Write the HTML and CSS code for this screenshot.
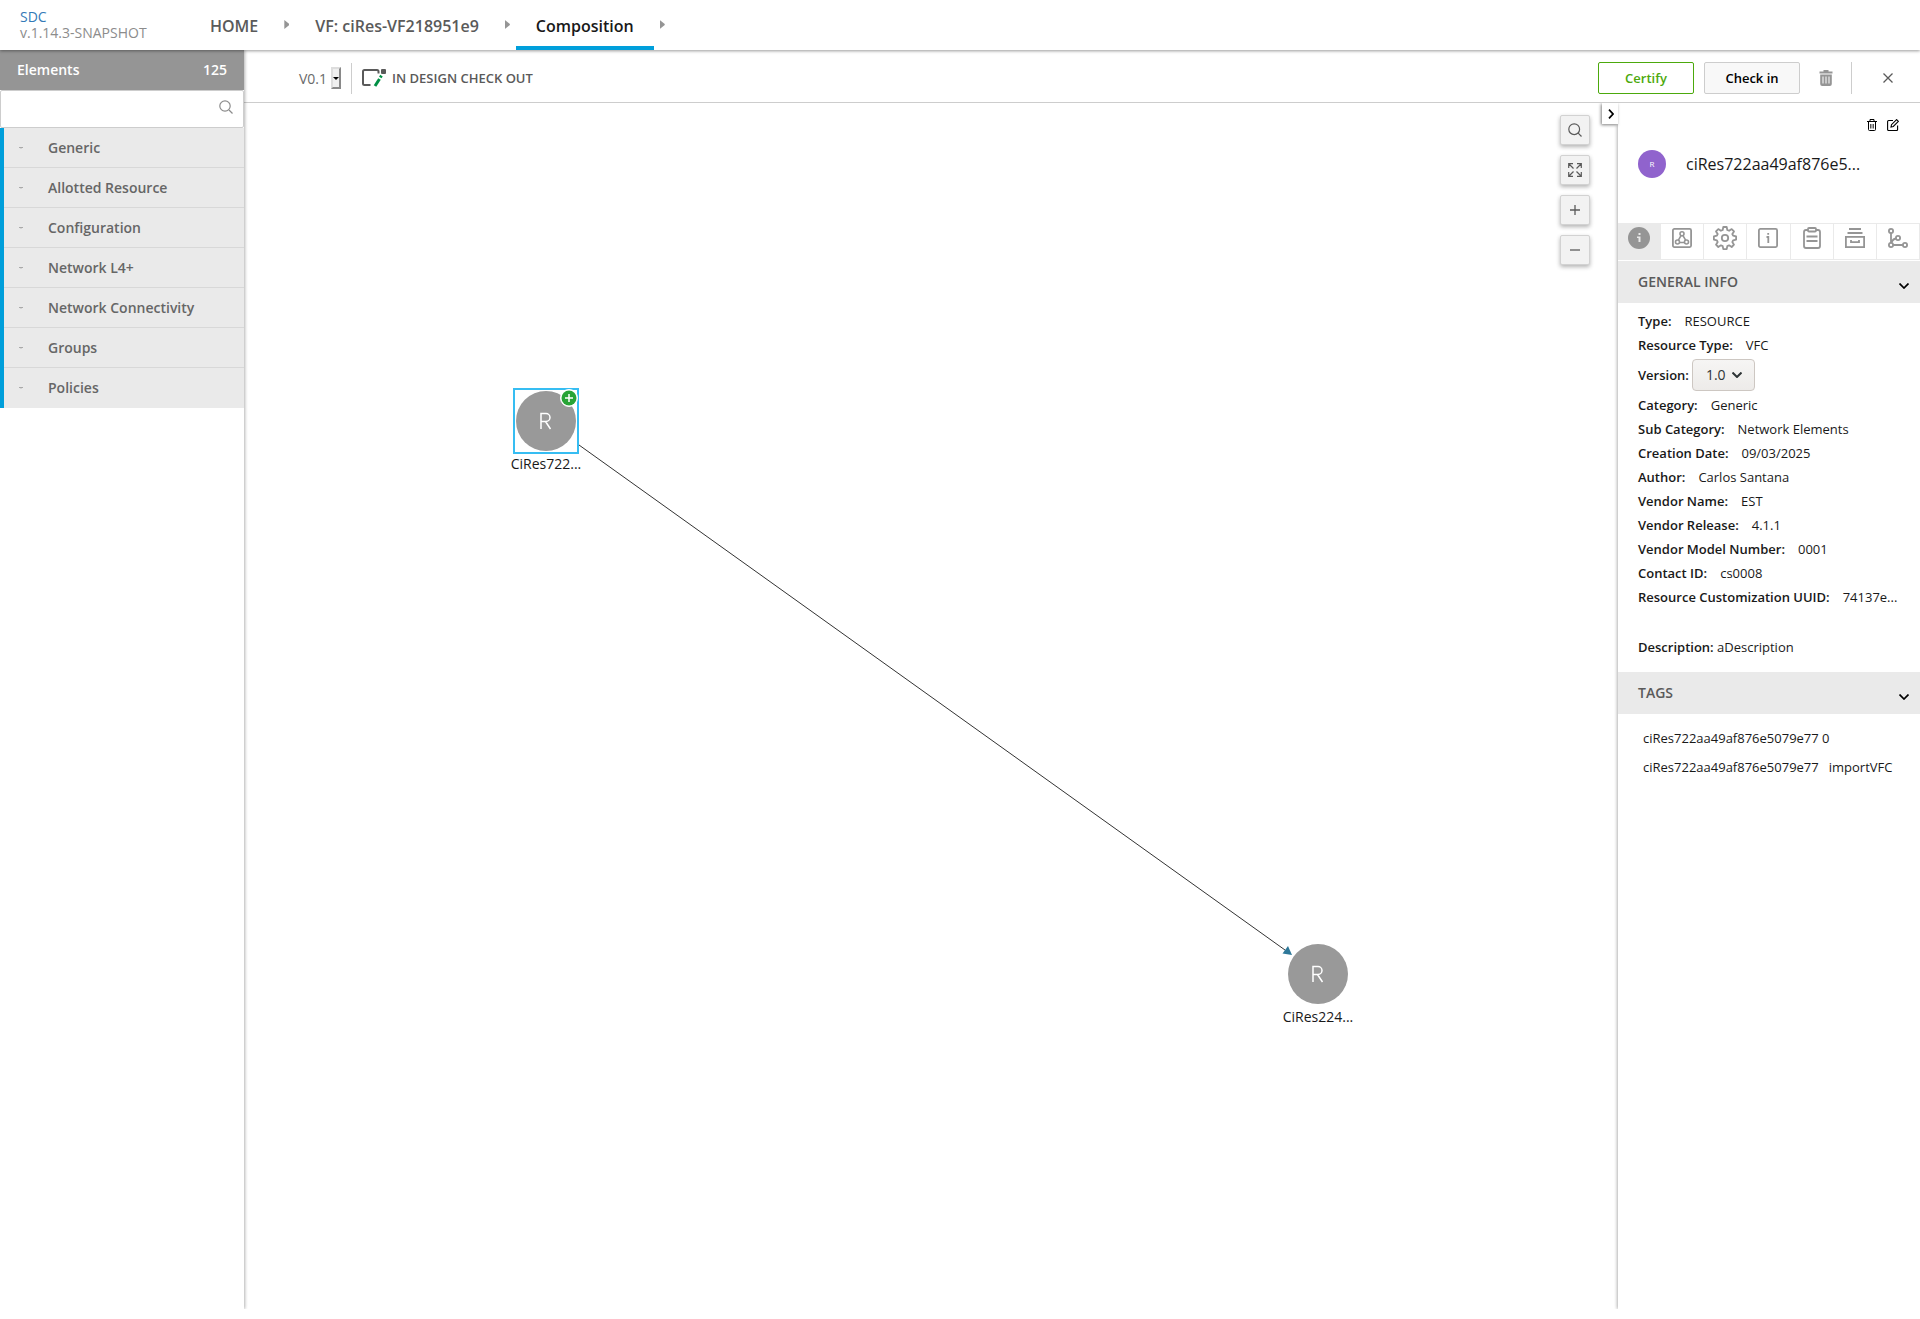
FILE: index.html
```html
<!DOCTYPE html>
<html lang="en">
<head>
    <meta charset="UTF-8">
    <meta name="viewport" content="width=device-width, initial-scale=1.0">
    <title>SDC - Composition</title>
    <link rel="stylesheet" href="styles.css">
</head>
<body>
    <header class="top-nav">
        <div class="logo">
            <a href="#">SDC</a>
            <span class="app-version">v.1.14.3-SNAPSHOT</span>
        </div>
        <nav class="breadcrumbs">
            <a class="crumb" href="#">HOME</a>
            <span class="crumb-arrow"></span>
            <a class="crumb" href="#">VF: ciRes-VF218951e9</a>
            <span class="crumb-arrow"></span>
            <a class="crumb active" href="#">Composition</a>
            <span class="crumb-arrow"></span>
        </nav>
    </header>

    <div class="workspace">
        <!-- Palette -->
        <aside class="palette">
            <div class="palette-header">
                <span>Elements</span>
                <span>125</span>
            </div>
            <div class="palette-search">
                <input type="text" aria-label="Search elements">
                <svg width="14" height="14" viewBox="0 0 14 14" fill="none" stroke="#8c8c8c" stroke-width="1.2">
                    <circle cx="6" cy="6" r="5.2"/>
                    <path d="M10 10l3.5 3.5"/>
                </svg>
            </div>
            <div class="palette-groups">
                <button class="group"><span class="group-arrow"></span>Generic</button>
                <button class="group"><span class="group-arrow"></span>Allotted Resource</button>
                <button class="group"><span class="group-arrow"></span>Configuration</button>
                <button class="group"><span class="group-arrow"></span>Network L4+</button>
                <button class="group"><span class="group-arrow"></span>Network Connectivity</button>
                <button class="group"><span class="group-arrow"></span>Groups</button>
                <button class="group"><span class="group-arrow"></span>Policies</button>
            </div>
        </aside>

        <div class="main">
            <!-- Toolbar -->
            <div class="toolbar">
                <label class="version-label" for="version">V0.1</label>
                <select class="version-select" id="version">
                    <option>V0.1</option>
                </select>
                <div class="status">
                    <svg width="24" height="18" viewBox="0 0 24 18" fill="none">
                        <path d="M16.5 4.5V2.5Q16.5 1 15 1H2.5Q1 1 1 2.5v12Q1 16 2.5 16h6" stroke="#5a5a5a" stroke-width="2"/>
                        <rect x="19" y="0" width="5" height="5" rx="1" fill="#5a5a5a"/>
                        <path d="M13 17l4.500-7" stroke="#009045" stroke-width="3"/>
                        <path d="M18.300 8.500l1.200-1.800" stroke="#009045" stroke-width="3"/>
                    </svg>
                    <span>IN DESIGN CHECK OUT</span>
                </div>
                <div class="toolbar-actions">
                    <button class="btn btn-certify">Certify</button>
                    <button class="btn btn-checkin">Check in</button>
                    <button class="icon-btn" aria-label="Delete">
                        <svg width="14" height="16" viewBox="0 0 14 16">
                            <path d="M0.500 1.500h4V0h5v1.500h4v2h-13z" fill="#959595"/>
                            <path d="M1.200 4.500h11.600V14q0 2-2 2H3.200q-2 0-2-2z" fill="#959595"/>
                            <path d="M4 6.500v7M7 6.500v7M10 6.500v7" stroke="#fff" stroke-width="1"/>
                        </svg>
                    </button>
                    <button class="icon-btn close-btn" aria-label="Close">
                        <svg width="10" height="10" viewBox="0 0 10 10" stroke="#5a5a5a" stroke-width="1.300">
                            <path d="M0.500 0.500l9 9M9.500 0.500l-9 9"/>
                        </svg>
                    </button>
                </div>
            </div>

            <div class="content">
                <!-- Composition graph -->
                <div class="canvas">
                    <svg class="edges" aria-hidden="true">
                        <path d="M335 342L1041 847" stroke="#333" fill="none"/>
                        <path d="M1048 852l-9.500-1.500 5.500-7.500z" fill="#2d7899"/>
                    </svg>
                    <div class="node node-source selected">
                        <div class="node-icon">
                            <svg width="60" height="60" viewBox="0 0 60 60" fill="none" stroke="#fff" stroke-width="1.500">
                                <circle cx="30" cy="30" r="30" fill="#999" stroke="none"/>
                                <path d="M25 38V22.500h5a4 4 0 0 1 0 8H25M29.500 30.500l5 7.500"/>
                            </svg>
                        </div>
                        <span class="node-name">CiRes722...</span>
                        <button class="node-add" aria-label="Add">
                            <svg width="16" height="16" viewBox="0 0 16 16">
                                <circle cx="8" cy="8" r="7.500" fill="#28a436"/>
                                <path d="M8 4v8M4 8h8" stroke="#fff" stroke-width="1.500"/>
                            </svg>
                        </button>
                    </div>
                    <div class="node node-target">
                        <div class="node-icon">
                            <svg width="60" height="60" viewBox="0 0 60 60" fill="none" stroke="#fff" stroke-width="1.500">
                                <circle cx="30" cy="30" r="30" fill="#999" stroke="none"/>
                                <path d="M25 38V22.500h5a4 4 0 0 1 0 8H25M29.500 30.500l5 7.500"/>
                            </svg>
                        </div>
                        <span class="node-name">CiRes224...</span>
                    </div>

                    <div class="canvas-tools">
                        <button class="tool" aria-label="Search">
                            <svg width="14" height="14" viewBox="0 0 14 14" fill="none" stroke="#5a5a5a" stroke-width="1.200">
                                <circle cx="6.200" cy="6.200" r="5.400"/>
                                <path d="M10.200 10.200l3.300 3.300"/>
                            </svg>
                        </button>
                        <button class="tool" aria-label="Fit to screen">
                            <svg width="14" height="14" viewBox="0 0 14 14" fill="none" stroke="#5a5a5a" stroke-width="1.200">
                                <path d="M0.700 5V0.700H5M9 0.700h4.300V5M13.300 9v4.300H9M5 13.300H0.700V9M1 1l4.500 4.500M13 1L8.500 5.500M13 13L8.500 8.500M1 13l4.500-4.500"/>
                            </svg>
                        </button>
                        <button class="tool" aria-label="Zoom in">
                            <svg width="10" height="10" viewBox="0 0 10 10" stroke="#5a5a5a" stroke-width="1.300">
                                <path d="M5 0v10M0 5h10"/>
                            </svg>
                        </button>
                        <button class="tool" aria-label="Zoom out">
                            <svg width="10" height="10" viewBox="0 0 10 10" stroke="#5a5a5a" stroke-width="1.300">
                                <path d="M0 5h10"/>
                            </svg>
                        </button>
                    </div>
                </div>

                <!-- Details panel -->
                <aside class="details">
                    <button class="collapse" aria-label="Collapse panel">
                        <svg width="6" height="10" viewBox="0 0 6 10" fill="none" stroke="#000" stroke-width="1.700">
                            <path d="M1 0.700L5 5 1 9.300"/>
                        </svg>
                    </button>
                    <div class="details-header">
                        <div class="details-actions">
                            <button class="icon-btn" aria-label="Delete instance">
                                <svg width="10" height="12" viewBox="0 0 10 12" fill="none" stroke="#000">
                                    <path d="M0 2.500h10M3 2.500v-2h4v2M1.500 2.500v8q0 1 1 1h5q1 0 1-1v-8"/>
                                    <path d="M3.500 5v4.500M5 5v4.500M6.500 5v4.500" stroke="#555"/>
                                </svg>
                            </button>
                            <button class="icon-btn" aria-label="Edit instance">
                                <svg width="12" height="12" viewBox="0 0 12 12" fill="none" stroke="#000" stroke-width="1.100">
                                    <path d="M6 1.500H1.600Q0.600 1.500 0.600 2.500v8q0 1 1 1h8q1 0 1-1V6.500M4 8l0.500-2.300L9.600 0.600l1.800 1.800L6.300 7.500z"/>
                                </svg>
                            </button>
                        </div>
                        <div class="details-title">
                            <span class="avatar">R</span>
                            <h1>ciRes722aa49af876e5...</h1>
                        </div>
                    </div>

                    <div class="tabs">
                        <button class="tab active" aria-label="Information">
                            <svg width="22" height="22" viewBox="0 0 22 22">
                                <circle cx="11" cy="11" r="11" fill="#959595"/>
                                <path d="M10.500 6h2v2h-2zM9 9.500h3.500V15h-2v-4H9z" fill="#e8e8e8"/>
                            </svg>
                        </button>
                        <button class="tab" aria-label="Composition">
                            <svg width="20" height="20" viewBox="0 0 20 20" fill="none" stroke="#959595" stroke-width="1.800">
                                <rect x="0.900" y="0.900" width="18.200" height="18.200" rx="1.500"/>
                                <g stroke-width="1.600">
                                    <circle cx="10" cy="5.800" r="2"/>
                                    <circle cx="5.500" cy="14" r="2"/>
                                    <circle cx="14.500" cy="14" r="2"/>
                                    <path d="M9 7.600L6.400 12.200M11 7.600l2.600 4.600M7.500 14.500h5"/>
                                </g>
                            </svg>
                        </button>
                        <button class="tab" aria-label="Inputs">
                            <svg width="24" height="24" viewBox="0 0 24 24" fill="none" stroke="#959595" stroke-width="1.800" stroke-linejoin="round">
                                <circle cx="12" cy="12" r="3.200"/>
                                <path d="M10.300 1h3.400l.6 3 1.800.8 2.600-1.700 2.300 2.300-1.700 2.600.8 1.700 3 .7v3.300l-3 .6-.8 1.800 1.700 2.600-2.300 2.300-2.600-1.700-1.800.8-.6 3h-3.400l-.6-3-1.800-.8-2.600 1.700L3 18.700l1.700-2.600-.8-1.800-3-.6v-3.300l3-.7.8-1.700L3 5.400l2.300-2.300 2.600 1.700 1.800-.8z"/>
                            </svg>
                        </button>
                        <button class="tab" aria-label="Properties">
                            <svg width="20" height="20" viewBox="0 0 20 20" fill="none" stroke="#959595" stroke-width="1.800">
                                <rect x="0.900" y="0.900" width="18.200" height="18.200" rx="1.500"/>
                                <path d="M9.300 5.800h1.800M8.500 9h1.800v6"/>
                            </svg>
                        </button>
                        <button class="tab" aria-label="Deployment artifacts">
                            <svg width="18" height="22" viewBox="0 0 18 22" fill="none" stroke="#959595" stroke-width="1.800">
                                <path d="M5 3H3Q1 3 1 5v14q0 2 2 2h12q2 0 2-2V5q0-2-2-2h-2"/>
                                <rect x="5" y="1" width="8" height="3.500" rx="1"/>
                                <path d="M3.500 9.500h11M3.500 14h11"/>
                            </svg>
                        </button>
                        <button class="tab" aria-label="Information artifacts">
                            <svg width="20" height="20" viewBox="0 0 20 20" fill="none" stroke="#959595" stroke-width="1.800">
                                <path d="M4 1h12M2.500 5h15"/>
                                <rect x="0.900" y="8.900" width="18.200" height="10.200"/>
                                <path d="M6 12v2.200h8V12"/>
                            </svg>
                        </button>
                        <button class="tab" aria-label="Relations">
                            <svg width="20" height="20" viewBox="0 0 20 20" fill="none" stroke="#959595" stroke-width="1.800">
                                <circle cx="3" cy="3" r="2.100"/>
                                <circle cx="3" cy="17" r="2.100"/>
                                <circle cx="10" cy="10" r="2.100"/>
                                <circle cx="17" cy="17" r="2.100"/>
                                <path d="M3 5v10M5 17h10M8 10.500q-3.500.5-4.500 4.500"/>
                            </svg>
                        </button>
                    </div>

                    <button class="section-header">
                        GENERAL INFO
                        <svg width="10" height="6" viewBox="0 0 10 6" fill="none" stroke="#000" stroke-width="1.700"><path d="M0.500 0.500L5 5 9.500 0.500"/></svg>
                    </button>
                    <div class="info">
                        <div class="info-row"><b>Type:</b><span>RESOURCE</span></div>
                        <div class="info-row"><b>Resource Type:</b><span>VFC</span></div>
                        <div class="info-row info-version">
                            <label for="instance-version">Version:</label>
                            <select id="instance-version">
                                <option>1.0</option>
                            </select>
                        </div>
                        <div class="info-row"><b>Category:</b><span>Generic</span></div>
                        <div class="info-row"><b>Sub Category:</b><span>Network Elements</span></div>
                        <div class="info-row"><b>Creation Date:</b><span>09/03/2025</span></div>
                        <div class="info-row"><b>Author:</b><span>Carlos Santana</span></div>
                        <div class="info-row"><b>Vendor Name:</b><span>EST</span></div>
                        <div class="info-row"><b>Vendor Release:</b><span>4.1.1</span></div>
                        <div class="info-row"><b>Vendor Model Number:</b><span>0001</span></div>
                        <div class="info-row"><b>Contact ID:</b><span>cs0008</span></div>
                        <div class="info-row"><b>Resource Customization UUID:</b><span>74137e...</span></div>
                        <p class="description"><b>Description:</b> aDescription</p>
                    </div>

                    <button class="section-header">
                        TAGS
                        <svg width="10" height="6" viewBox="0 0 10 6" fill="none" stroke="#000" stroke-width="1.700"><path d="M0.500 0.500L5 5 9.500 0.500"/></svg>
                    </button>
                    <div class="tags">
                        <span>ciRes722aa49af876e5079e77 0</span>
                        <span>ciRes722aa49af876e5079e77</span>
                        <span>importVFC</span>
                    </div>
                </aside>
            </div>
        </div>
    </div>
</body>
</html>
```
FILE: styles.css
```css
* {
    box-sizing: border-box;
}

body {
    margin: 0;
    min-height: 100vh;
    display: flex;
    flex-direction: column;
    padding-bottom: 10px;
    font-family: "Open Sans", "Noto Sans", sans-serif;
    font-size: 13px;
    color: #191919;
    background: #fff;
}

button,
select,
input {
    font: inherit;
    color: inherit;
}

button {
    padding: 0;
    border: none;
    background: none;
    cursor: pointer;
}

a {
    text-decoration: none;
}

svg {
    display: block;
    flex-shrink: 0;
}

b {
    font-weight: 600;
}

/* Top navigation */
.top-nav {
    position: relative;
    z-index: 3;
    display: flex;
    height: 50px;
    background: #fff;
    box-shadow: 0 1px 3px rgba(0, 0, 0, 0.4);
}

.logo {
    display: flex;
    flex-direction: column;
    width: 190px;
    padding: 9px 0 0 20px;
    font-size: 14px;
    line-height: 16px;
}

.logo a {
    color: #337ab7;
}

.app-version {
    color: #8c8c8c;
}

.breadcrumbs {
    display: flex;
    align-items: stretch;
}

.crumb {
    padding: 4px 20px 0;
    border-bottom: 4px solid transparent;
    font-size: 16px;
    font-weight: 600;
    line-height: 44px;
    color: #5a5a5a;
}

.crumb.active {
    color: #191919;
    border-bottom-color: #009fdb;
}

.crumb-arrow {
    width: 5px;
    margin: 20px 6px;
    height: 9px;
    background: #959595;
    clip-path: polygon(0 0, 100% 45%, 100% 55%, 0 100%);
}

.workspace {
    flex: 1;
    display: flex;
}

/* Palette */
.palette {
    position: relative;
    z-index: 2;
    width: 244px;
    flex-shrink: 0;
    background: #fff;
    box-shadow: 1px 0 3px rgba(0, 0, 0, 0.3);
    clip-path: inset(0 -6px 0 0);
}

.palette-header {
    display: flex;
    justify-content: space-between;
    padding: 0 17px;
    font-size: 14px;
    font-weight: 600;
    line-height: 40px;
    color: #fff;
    background: #959595;
}

.palette-search {
    display: flex;
    align-items: center;
    height: 38px;
    padding-right: 10px;
    border: 1px solid #cdcdcd;
    border-radius: 2px;
}

.palette-search input {
    flex: 1;
    min-width: 0;
    height: 100%;
    padding: 0 10px;
    border: none;
    outline: none;
    background: none;
}

.palette-search svg {
    margin-bottom: 4px;
}

.palette-groups {
    border-left: 4px solid #009fdb;
}

.group {
    display: flex;
    align-items: center;
    width: 100%;
    height: 40px;
    padding-left: 15px;
    border-bottom: 1px solid #d8d8d8;
    font-size: 14px;
    font-weight: 600;
    color: #666;
    background: #eaeaea;
}

.group:last-child {
    border-bottom-color: #eaeaea;
}

.group-arrow {
    width: 4px;
    height: 2px;
    margin-right: 25px;
    background: #959595;
    clip-path: polygon(0 0, 50% 50%, 100% 0, 100% 50%, 50% 100%, 0 50%);
}

/* Toolbar */
.main {
    flex: 1;
    min-width: 0;
    display: flex;
    flex-direction: column;
}

.toolbar {
    display: flex;
    align-items: center;
    height: 53px;
    padding: 4px 27px 0 55px;
    border-bottom: 1px solid #cdcdcd;
}

.version-label {
    font-size: 14px;
    color: #6a6a6a;
}

.version-select {
    appearance: none;
    width: 10px;
    height: 22px;
    margin-left: 4px;
    border: 2px outset #ddd;
    border-radius: 0;
    text-indent: 10px;
    overflow: hidden;
    background: #efefef url("data:image/svg+xml,%3Csvg xmlns='http://www.w3.org/2000/svg' viewBox='0 0 6 3'%3E%3Cpath d='M0 0h6L3 3z'/%3E%3C/svg%3E") center / 6px 3px no-repeat;
}

.status {
    display: flex;
    align-items: center;
    gap: 6px;
    height: 31px;
    margin-left: 10px;
    padding-left: 10px;
    border-left: 1px solid #cdcdcd;
    font-size: 13px;
    font-weight: 600;
    color: #5a5a5a;
}

.toolbar-actions {
    display: flex;
    align-items: center;
    margin-left: auto;
}

.btn {
    width: 96px;
    height: 32px;
    margin-right: 10px;
    border: 1px solid #cdcdcd;
    border-radius: 2px;
    font-size: 13px;
    font-weight: 600;
}

.btn-certify {
    color: #4ca90c;
    border-color: #4ca90c;
    background: #fff;
}

.btn-checkin {
    margin-right: 19px;
    color: #000;
    background: #f8f8f8;
}

.close-btn {
    display: flex;
    align-items: center;
    height: 32px;
    margin-left: 18px;
    padding-left: 31px;
    border-left: 1px solid #cdcdcd;
}

/* Canvas */
.content {
    flex: 1;
    display: flex;
}

.canvas {
    position: relative;
    flex: 1;
    min-width: 0;
    overflow: hidden;
}

.edges {
    position: absolute;
    inset: 0;
    width: 100%;
    height: 100%;
}

.node {
    position: absolute;
    display: flex;
    flex-direction: column;
    align-items: center;
    width: 80px;
}

.node-source {
    left: 262px;
    top: 285px;
}

.node-target {
    left: 1034px;
    top: 838px;
}

.node-icon {
    display: flex;
    align-items: center;
    justify-content: center;
    width: 66px;
    height: 66px;
    border: 2px solid transparent;
}

.selected .node-icon {
    border-color: #36bdf2;
}

.node-name {
    font-size: 14px;
    line-height: 20px;
    color: #191919;
}

.node-add {
    position: absolute;
    top: 1px;
    right: 8px;
    border-radius: 50%;
    border: 1px solid #fff;
    background: #fff;
}

.canvas-tools {
    position: absolute;
    top: 12px;
    right: 28px;
    display: flex;
    flex-direction: column;
    gap: 10px;
}

.tool {
    display: flex;
    align-items: center;
    justify-content: center;
    width: 30px;
    height: 30px;
    border: 1px solid #d2d2d2;
    border-radius: 2px;
    background: #f2f2f2;
    box-shadow: 0 2px 4px rgba(0, 0, 0, 0.3);
}

/* Details panel */
.details {
    position: relative;
    width: 302px;
    flex-shrink: 0;
    background: #fff;
    box-shadow: -1px 0 3px rgba(0, 0, 0, 0.3);
    clip-path: inset(0 0 0 -24px);
}

.collapse {
    position: absolute;
    top: 0;
    left: -16px;
    display: flex;
    align-items: center;
    justify-content: center;
    width: 16px;
    height: 21px;
    padding-left: 2px;
    background: #fff;
    box-shadow: -1px 1px 3px rgba(0, 0, 0, 0.5);
}

.details-header {
    height: 120px;
    padding: 16px 21px 0 20px;
}

.details-actions {
    display: flex;
    justify-content: flex-end;
    gap: 10px;
}

.details-title {
    display: flex;
    align-items: center;
    gap: 20px;
    margin-top: 19px;
}

.avatar {
    width: 28px;
    border-radius: 50%;
    font-size: 8px;
    line-height: 28px;
    text-align: center;
    color: #fff;
    background: #9063cd;
}

h1 {
    margin: 0;
    font-size: 16px;
    font-weight: 400;
    line-height: 28px;
}

.tabs {
    display: flex;
    height: 37px;
    margin-bottom: 1px;
    border: 1px solid #eaeaea;
    border-width: 1px 0;
}

.tab {
    display: flex;
    flex: 1;
    justify-content: center;
    align-items: center;
    padding-bottom: 7px;
    border-right: 1px solid #eaeaea;
}

.tab.active {
    background: #eaeaea;
}

.section-header {
    display: flex;
    align-items: center;
    justify-content: space-between;
    width: 100%;
    height: 42px;
    padding: 0 11px 2px 20px;
    font-size: 14px;
    font-weight: 600;
    color: #5a5a5a;
    background: #eaeaea;
}

.section-header svg {
    margin-top: 10px;
}

.info {
    padding: 6px 20px 13px;
}

.info-row {
    display: flex;
    gap: 13px;
    line-height: 24px;
    white-space: nowrap;
}

.info-version {
    align-items: center;
    gap: 3px;
    height: 36px;
}

.info-version label {
    font-weight: 600;
}

.info-version select {
    appearance: none;
    height: 32px;
    width: 63px;
    padding: 0 13px;
    border: 1px solid #cdc7c2;
    border-radius: 4px;
    font-size: 14px;
    color: #2e3436;
    background: url("data:image/svg+xml,%3Csvg xmlns='http://www.w3.org/2000/svg' viewBox='0 0 10 6' fill='none' stroke='%232e3436' stroke-width='2'%3E%3Cpath d='M.5.5L5 5 9.500.5'/%3E%3C/svg%3E") right 12px center / 10px 6px no-repeat, linear-gradient(#f6f5f4, #edebe9);
}

.description {
    margin: 26px 0 0;
    line-height: 24px;
}

.tags {
    display: flex;
    flex-wrap: wrap;
    column-gap: 10px;
    padding: 10px 20px 0 25px;
    line-height: 29px;
}
```
